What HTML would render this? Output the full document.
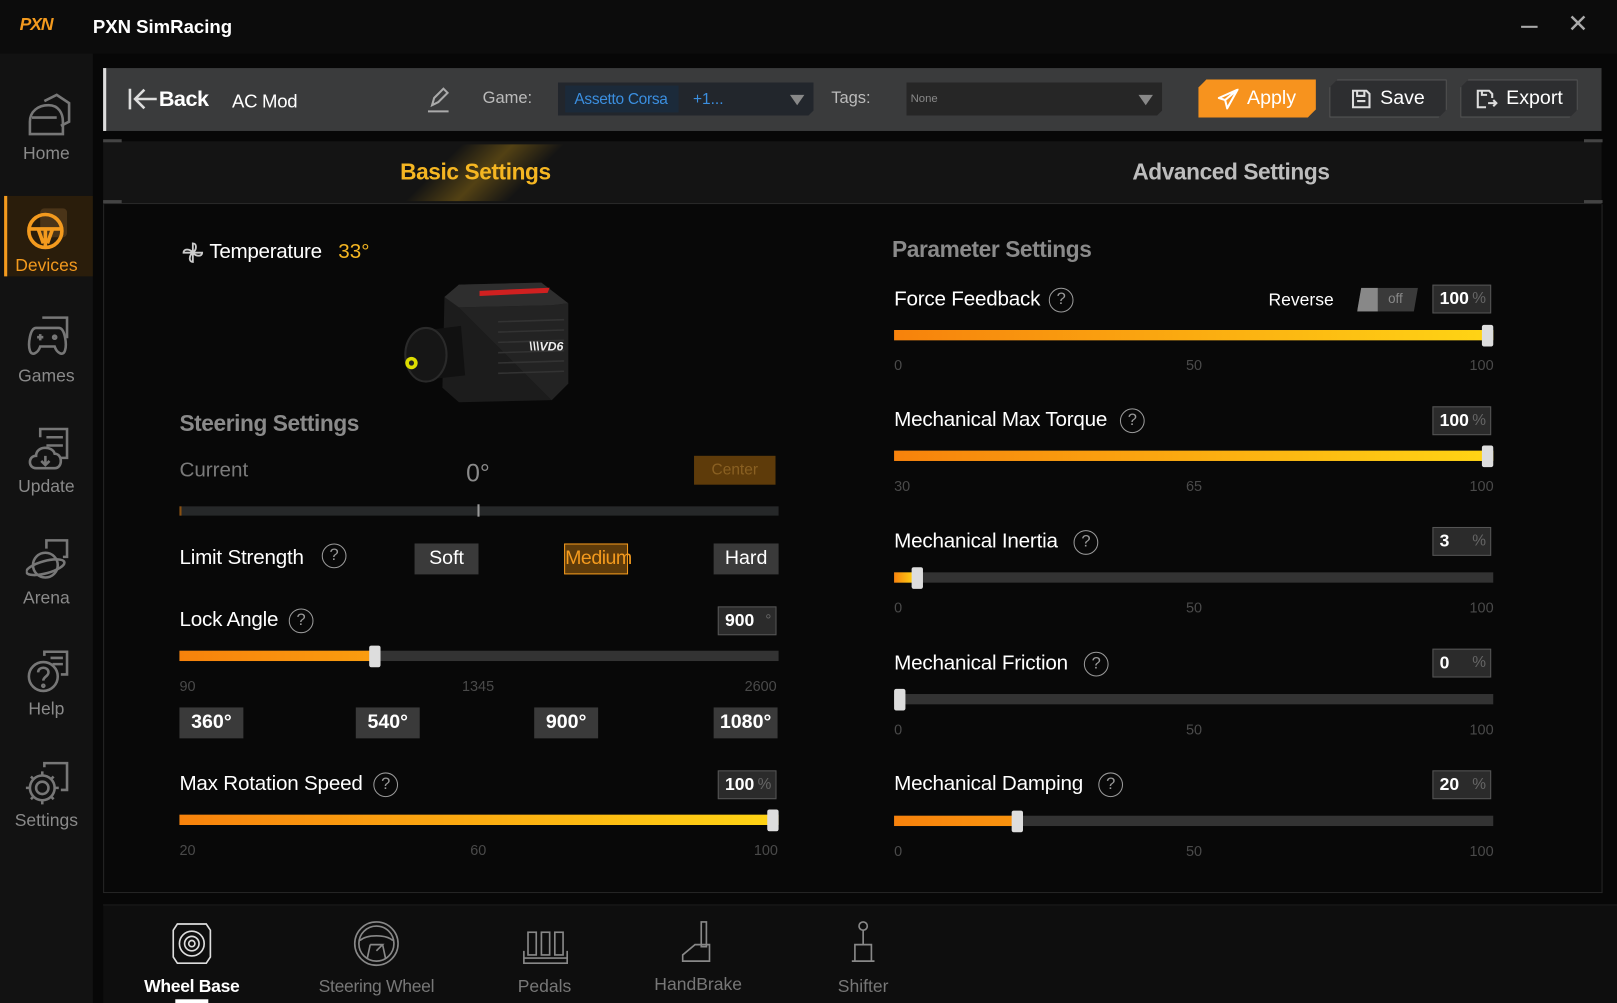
<!DOCTYPE html>
<html><head><meta charset="utf-8"><style>
*{margin:0;padding:0;box-sizing:border-box}
html,body{width:1617px;height:1003px;overflow:hidden;background:#060606}
#r{position:absolute;left:0;top:0;width:1568px;height:973px;transform:scale(1.03125);transform-origin:0 0;font-family:"Liberation Sans",sans-serif;color:#fff;background:#070707}
.a{position:absolute;white-space:nowrap}
.side{position:absolute;left:0;top:52px;width:90px;height:921px;background:#121212}
.sl{position:absolute;width:90px;text-align:center;font-size:17px;color:#8a8a8a}
.si{position:absolute;left:25px}
.btn{position:absolute;height:37px;border:1px solid #585858;background:#2d2e30;font-size:19px;display:flex;align-items:center;justify-content:center;gap:8px;clip-path:polygon(8px 0,100% 0,100% calc(100% - 8px),calc(100% - 8px) 100%,0 100%,0 8px)}
.lbl{font-size:20px;color:#fff;letter-spacing:-0.2px}
.q{display:inline-block;width:24px;height:24px;border:1.5px solid #999;border-radius:50%;color:#999;font-size:16px;text-align:center;line-height:21px;position:absolute}
.track{position:absolute;height:10px;background:#333}
.fill{position:absolute;left:0;top:0;height:10px;background:linear-gradient(90deg,#f7820c,#ffd515);}
.hd{position:absolute;width:11px;height:21px;background:#ddd;border-radius:2px;top:-5px}
.tk{position:absolute;font-size:14px;color:#4a4a4a}
.vb{position:absolute;width:57px;height:28px;border:1px solid #555;background:#2b2b2b;font-size:17px;font-weight:bold;padding-left:6px;line-height:26px}
.vb span{color:#666;font-weight:normal;font-size:15px;position:absolute;right:4px}
.pb{position:absolute;height:30px;background:#3a3a3a;font-size:19px;text-align:center;line-height:30px}
.bi{position:absolute;text-align:center;font-size:17px;color:#777;width:160px}
</style></head><body><div id="r">
<!-- title bar -->
<div class="a" style="left:0;top:0;width:1568px;height:52px;background:#0c0c0c"></div>
<div class="a" style="left:19px;top:14px;font-size:17px;font-weight:bold;color:#f39a1e;font-style:italic;letter-spacing:-1px">PXN</div>
<div class="a" style="left:90px;top:16px;font-size:18px;font-weight:bold">PXN SimRacing</div>
<div class="a" style="left:1475px;top:25px;width:16px;height:2px;background:#aaa"></div>
<div class="a" style="left:1520px;top:9px;font-size:24px;color:#aaa">✕</div>
<!-- sidebar -->
<div class="side">
 <svg class="si" style="top:38px" width="44" height="44" viewBox="0 0 44 44" fill="none" stroke="#777" stroke-width="2.5"><path d="M18 8 30 2 42 10 42 28 34 32"/><path d="M4 40 4 28C4 18 12 12 22 12 32 12 36 20 36 28L36 40Z"/><path d="M6 24 30 24"/></svg>
 <div class="sl" style="top:87px">Home</div>
 <div style="position:absolute;left:4px;top:138px;width:86px;height:78px;background:#2a1d0b;border-left:3px solid #f39a1e"></div>
 <svg class="si" style="top:148px" width="44" height="44" viewBox="0 0 44 44"><rect x="14" y="2" width="26" height="28" rx="4" fill="#4a3418"/><circle cx="19" cy="24" r="16" fill="none" stroke="#f39a1e" stroke-width="3.5"/><path d="M4 22 L34 22 M19 22 L19 39 M12 22 L17 36 M26 22 L21 36" stroke="#f39a1e" stroke-width="3.5"/></svg>
 <div class="sl" style="top:196px;color:#f39a1e">Devices</div>
 <svg class="si" style="top:252px" width="44" height="44" viewBox="0 0 44 44" fill="none" stroke="#777" stroke-width="2.5"><path d="M16 4 40 4 40 24"/><path d="M10 14 32 14C38 14 40 30 38 36 36 42 30 38 28 32L14 32C12 38 6 42 4 36 2 30 4 14 10 14Z"/><path d="M11 23 17 23 M14 20 14 26"/><circle cx="28" cy="23" r="1.5"/></svg>
 <div class="sl" style="top:303px">Games</div>
 <svg class="si" style="top:362px" width="44" height="44" viewBox="0 0 44 44" fill="none" stroke="#777" stroke-width="2.5"><path d="M14 10 14 2 40 2 40 30 34 30"/><path d="M20 10 36 10 M20 18 36 18"/><path d="M10 40C2 40 2 28 10 28 10 18 26 18 28 26 36 26 36 40 28 40Z"/><path d="M19 28 19 36 M15 33 19 37 23 33"/></svg>
 <div class="sl" style="top:410px">Update</div>
 <svg class="si" style="top:470px" width="44" height="44" viewBox="0 0 44 44" fill="none" stroke="#777" stroke-width="2.5"><path d="M20 10 20 2 40 2 40 18 36 18"/><circle cx="19" cy="26" r="12"/><ellipse cx="19" cy="28" rx="19" ry="6" transform="rotate(-15 19 28)"/></svg>
 <div class="sl" style="top:518px">Arena</div>
 <svg class="si" style="top:578px" width="44" height="44" viewBox="0 0 44 44" fill="none" stroke="#777" stroke-width="2.5"><path d="M18 6 18 2 40 2 40 24 34 24"/><path d="M24 8 36 8 M26 14 36 14"/><circle cx="17" cy="26" r="14"/><path d="M12 22C12 16 22 16 22 22 22 26 17 26 17 30"/><circle cx="17" cy="35" r="1"/></svg>
 <div class="sl" style="top:626px">Help</div>
 <svg class="si" style="top:686px" width="44" height="44" viewBox="0 0 44 44" fill="none" stroke="#777" stroke-width="2.5"><path d="M18 6 18 2 40 2 40 28 34 28"/><circle cx="16" cy="26" r="6"/><path d="M16 10 16 14 M16 38 16 42 M0 26 4 26 M28 26 32 26 M5 15 8 18 M24 34 27 37 M5 37 8 34 M24 18 27 15"/><circle cx="16" cy="26" r="12"/></svg>
 <div class="sl" style="top:734px">Settings</div>
</div>
<!-- toolbar -->
<div class="a" style="left:100px;top:66px;width:1453px;height:61px;background:#3a3b3c;border-left:3px solid #ddd"></div>
<svg class="a" style="left:124px;top:84px" width="30" height="24" viewBox="0 0 30 24" fill="none" stroke="#ddd" stroke-width="2.5"><path d="M2 2 2 22 M28 12 8 12 M16 3 7 12 16 21"/></svg>
<div class="a" style="left:154px;top:85px;font-size:21px;font-weight:bold;letter-spacing:-0.5px">Back</div>
<div class="a" style="left:225px;top:88px;font-size:18px;letter-spacing:-0.3px">AC Mod</div>
<svg class="a" style="left:413px;top:84px" width="24" height="26" viewBox="0 0 24 26" fill="none" stroke="#aaa" stroke-width="2"><path d="M6 18 8 11 17 2 21 6 12 15Z M2 24 22 24"/></svg>
<div class="a" style="left:468px;top:87px;font-size:16px;color:#bbb">Game:</div>
<div class="a" style="left:541px;top:80px;width:248px;height:32px;background:#22262c;clip-path:polygon(0 0,100% 0,100% calc(100% - 5px),calc(100% - 5px) 100%,0 100%)"></div>
<div class="a" style="left:548px;top:83px;width:110px;height:26px;background:#1b2a3a"></div>
<div class="a" style="left:557px;top:88px;font-size:15px;color:#3b8fe0;letter-spacing:-0.3px">Assetto Corsa</div>
<div class="a" style="left:672px;top:88px;font-size:15px;color:#3b8fe0">+1...</div>
<div class="a" style="left:766px;top:92px;border-left:7px solid transparent;border-right:7px solid transparent;border-top:10px solid #888"></div>
<div class="a" style="left:806px;top:87px;font-size:16px;color:#bbb">Tags:</div>
<div class="a" style="left:879px;top:80px;width:248px;height:32px;background:#262626;clip-path:polygon(0 0,100% 0,100% calc(100% - 5px),calc(100% - 5px) 100%,0 100%)"></div>
<div class="a" style="left:883px;top:90px;font-size:11px;color:#888">None</div>
<div class="a" style="left:1104px;top:92px;border-left:7px solid transparent;border-right:7px solid transparent;border-top:10px solid #888"></div>
<div class="btn" style="left:1162px;top:77px;width:114px;background:#f7931e;border-color:#f7931e"><svg width="20" height="20" viewBox="0 0 20 20" fill="none" stroke="#fff" stroke-width="2"><path d="M19 1 1 9 7 11 9 19Z M19 1 7 11"/></svg>Apply</div>
<div class="btn" style="left:1289px;top:77px;width:114px"><svg width="20" height="20" viewBox="0 0 20 20" fill="none" stroke="#ddd" stroke-width="2"><path d="M2 2 15 2 18 5 18 18 2 18Z M6 2 6 7 13 7 13 2 M6 12 14 12"/></svg>Save</div>
<div class="btn" style="left:1416px;top:77px;width:114px"><svg width="22" height="20" viewBox="0 0 22 20" fill="none" stroke="#ddd" stroke-width="2"><path d="M10 18 2 18 2 2 13 2 16 5 16 9 M6 2 6 6 11 6 M12 14 20 14 M17 11 20 14 17 17"/></svg>Export</div>
<!-- tabs -->
<div class="a" style="left:100px;top:137px;width:1453px;height:61px;background:#141414;border-bottom:1px solid #2c2c2c"></div>
<div class="a" style="left:100px;top:135px;width:18px;height:3px;background:#444"></div>
<div class="a" style="left:100px;top:194px;width:18px;height:3px;background:#444"></div>
<div class="a" style="left:1536px;top:135px;width:18px;height:3px;background:#444"></div>
<div class="a" style="left:1536px;top:194px;width:18px;height:3px;background:#444"></div>
<div class="a" style="left:420px;top:140px;width:100px;height:55px;background:linear-gradient(90deg,transparent,rgba(200,150,20,.35),transparent);transform:skewX(-45deg)"></div>
<div class="a" style="left:388px;top:154px;font-size:22px;font-weight:bold;color:#f5b622;letter-spacing:-0.4px">Basic Settings</div>
<div class="a" style="left:1098px;top:154px;font-size:22px;font-weight:bold;color:#bdbdbd;letter-spacing:-0.4px">Advanced Settings</div>
<!-- panel -->
<div class="a" style="left:100px;top:198px;width:1454px;height:668px;border:1px solid #262626;border-top:none;background:#080808"></div>
<!-- left content -->
<svg class="a" style="left:176px;top:234px" width="22" height="22" viewBox="0 0 22 22" fill="none" stroke="#ccc" stroke-width="1.8"><path d="M11 11 11 2 C15 2 15 8 11 11 M11 11 20 11 C20 15 14 15 11 11 M11 11 11 20 C7 20 7 14 11 11 M11 11 2 11 C2 7 8 7 11 11"/></svg>
<div class="a" style="left:203px;top:233px;font-size:20px;letter-spacing:-0.3px">Temperature</div>
<div class="a" style="left:328px;top:233px;font-size:20px;color:#f5b622">33°</div>
<!-- device image -->
<svg class="a" style="left:385px;top:272px" width="172" height="122" viewBox="0 0 172 122">
 <path d="M46 16 60 4 140 2 166 22 166 100 150 116 60 118 44 104Z" fill="#1c1c1c"/>
 <path d="M46 16 60 4 140 2 166 22 150 24 60 26Z" fill="#2e2e2e"/>
 <path d="M80 10 148 7 146 12 80 15Z" fill="#d02020"/>
 <path d="M60 26 150 24 166 22 166 100 150 116Z" fill="#232323"/>
 <g stroke="#333" stroke-width="1.5"><path d="M98 40 162 38 M98 50 162 48 M98 60 162 58 M98 70 162 68 M98 80 162 78 M98 90 162 88"/></g>
 <text x="128" y="68" font-family="Liberation Sans" font-size="12" font-weight="bold" font-style="italic" fill="#eee">\\\VD6</text>
 <path d="M30 48 62 44 66 92 30 96Z" fill="#111"/>
 <ellipse cx="28" cy="72" rx="20" ry="26" fill="#161616" stroke="#2a2a2a" stroke-width="2"/>
 <circle cx="14" cy="80" r="6" fill="#dd0"/>
 <circle cx="14" cy="80" r="2.5" fill="#222"/>
</svg>
<div class="a" style="left:174px;top:398px;font-size:22px;font-weight:bold;color:#8a8a8a;letter-spacing:-0.4px">Steering Settings</div>
<div class="a" style="left:174px;top:445px;font-size:20px;color:#7a7a7a">Current</div>
<div class="a" style="left:452px;top:446px;font-size:24px;color:#8a8a8a">0°</div>
<div class="a" style="left:673px;top:442px;width:79px;height:28px;background:#5e3b0a;color:#8a6022;font-size:15px;text-align:center;line-height:28px">Center</div>
<div class="a" style="left:174px;top:491px;width:581px;height:9px;background:#262829;border-left:2px solid #8a5010"></div>
<div class="a" style="left:463px;top:489px;width:2px;height:12px;background:#999"></div>
<div class="a lbl" style="left:174px;top:530px">Limit Strength</div>
<div class="q" style="left:312px;top:527px">?</div>
<div class="pb" style="left:402px;top:527px;width:62px">Soft</div>
<div class="pb" style="left:547px;top:527px;width:62px;background:#5e3b0a;border:1px solid #f39a1e;color:#f39a1e;line-height:28px;letter-spacing:-0.5px">Medium</div>
<div class="pb" style="left:692px;top:527px;width:63px">Hard</div>
<div class="a lbl" style="left:174px;top:590px">Lock Angle</div>
<div class="q" style="left:280px;top:590px">?</div>
<div class="vb" style="left:696px;top:588px">900<span>°</span></div>
<div class="track" style="left:174px;top:631px;width:581px"><div class="fill" style="width:190px;background-size:581px 10px"></div><div class="hd" style="left:184px"></div></div>
<div class="tk" style="left:174px;top:657px">90</div><div class="tk" style="left:448px;top:657px">1345</div><div class="tk" style="left:722px;top:657px">2600</div>
<div class="pb" style="left:174px;top:686px;width:62px;font-weight:bold">360°</div>
<div class="pb" style="left:345px;top:686px;width:62px;font-weight:bold">540°</div>
<div class="pb" style="left:518px;top:686px;width:62px;font-weight:bold">900°</div>
<div class="pb" style="left:692px;top:686px;width:62px;font-weight:bold">1080°</div>
<div class="a lbl" style="left:174px;top:749px">Max Rotation Speed</div>
<div class="q" style="left:362px;top:749px">?</div>
<div class="vb" style="left:696px;top:747px">100<span>%</span></div>
<div class="track" style="left:174px;top:790px;width:581px"><div class="fill" style="width:581px"></div><div class="hd" style="left:570px"></div></div>
<div class="tk" style="left:174px;top:816px">20</div><div class="tk" style="left:456px;top:816px">60</div><div class="tk" style="left:731px;top:816px">100</div>
<!-- right content -->
<div class="a" style="left:865px;top:229px;font-size:22px;font-weight:bold;color:#8a8a8a;letter-spacing:-0.4px">Parameter Settings</div>

<div class="a lbl" style="left:867px;top:279px">Force Feedback</div><div class="q" style="left:1017px;top:279px">?</div>
<div class="a" style="left:1230px;top:281px;font-size:17px">Reverse</div>
<div class="a" style="left:1316px;top:279px;width:59px;height:23px;background:#3a3a3a;clip-path:polygon(4px 0,100% 0,calc(100% - 4px) 100%,0 100%)"><div style="position:absolute;left:0;top:0;width:20px;height:23px;background:#888"></div><div style="position:absolute;left:30px;top:3px;font-size:13px;color:#888">off</div></div>
<div class="vb" style="left:1389px;top:276px">100<span>%</span></div>
<div class="track" style="left:867px;top:320px;width:581px"><div class="fill" style="width:581px"></div><div class="hd" style="left:570px"></div></div>
<div class="tk" style="left:867px;top:346px">0</div><div class="tk" style="left:1150px;top:346px">50</div><div class="tk" style="left:1425px;top:346px">100</div>

<div class="a lbl" style="left:867px;top:396px">Mechanical Max Torque</div><div class="q" style="left:1086px;top:396px">?</div>
<div class="vb" style="left:1389px;top:394px">100<span>%</span></div>
<div class="track" style="left:867px;top:437px;width:581px"><div class="fill" style="width:581px"></div><div class="hd" style="left:570px"></div></div>
<div class="tk" style="left:867px;top:463px">30</div><div class="tk" style="left:1150px;top:463px">65</div><div class="tk" style="left:1425px;top:463px">100</div>

<div class="a lbl" style="left:867px;top:514px">Mechanical Inertia</div><div class="q" style="left:1041px;top:514px">?</div>
<div class="vb" style="left:1389px;top:511px">3<span>%</span></div>
<div class="track" style="left:867px;top:555px;width:581px"><div class="fill" style="width:20px"></div><div class="hd" style="left:17px"></div></div>
<div class="tk" style="left:867px;top:581px">0</div><div class="tk" style="left:1150px;top:581px">50</div><div class="tk" style="left:1425px;top:581px">100</div>

<div class="a lbl" style="left:867px;top:632px">Mechanical Friction</div><div class="q" style="left:1051px;top:632px">?</div>
<div class="vb" style="left:1389px;top:629px">0<span>%</span></div>
<div class="track" style="left:867px;top:673px;width:581px"><div class="hd" style="left:0px"></div></div>
<div class="tk" style="left:867px;top:699px">0</div><div class="tk" style="left:1150px;top:699px">50</div><div class="tk" style="left:1425px;top:699px">100</div>

<div class="a lbl" style="left:867px;top:749px">Mechanical Damping</div><div class="q" style="left:1065px;top:749px">?</div>
<div class="vb" style="left:1389px;top:747px">20<span>%</span></div>
<div class="track" style="left:867px;top:791px;width:581px"><div class="fill" style="width:120px;background-size:581px 10px"></div><div class="hd" style="left:114px"></div></div>
<div class="tk" style="left:867px;top:817px">0</div><div class="tk" style="left:1150px;top:817px">50</div><div class="tk" style="left:1425px;top:817px">100</div>
<!-- bottom bar -->
<div class="a" style="left:100px;top:877px;width:1468px;height:96px;background:#0e0e0e;border-top:1px solid #1c1c1c"></div>
<svg class="a" style="left:166px;top:894px" width="40" height="42" viewBox="0 0 40 42" fill="none" stroke="#ddd" stroke-width="1.6"><path d="M6 2 34 2 38 8 38 34 34 40 6 40 2 34 2 8Z"/><circle cx="20" cy="21" r="12"/><circle cx="20" cy="21" r="7"/><circle cx="20" cy="21" r="3"/></svg>
<div class="bi" style="left:106px;top:947px;color:#fff;font-weight:bold;letter-spacing:-0.3px">Wheel Base</div>
<div class="a" style="left:170px;top:969px;width:32px;height:4px;background:#fff"></div>
<svg class="a" style="left:342px;top:892px" width="46" height="46" viewBox="0 0 46 46" fill="none" stroke="#888" stroke-width="1.6"><circle cx="23" cy="23" r="21"/><circle cx="23" cy="23" r="17"/><path d="M7 20C14 14 32 14 39 20 M17 24 14 38 M29 24 32 38 M17 24 29 24 23 30"/></svg>
<div class="bi" style="left:285px;top:947px;letter-spacing:-0.3px">Steering Wheel</div>
<svg class="a" style="left:506px;top:902px" width="46" height="34" viewBox="0 0 46 34" fill="none" stroke="#888" stroke-width="1.6"><rect x="6" y="2" width="8" height="22"/><rect x="19" y="2" width="8" height="22"/><rect x="32" y="2" width="8" height="22"/><path d="M2 20 2 32 44 32 44 20 M2 27 44 27"/></svg>
<div class="bi" style="left:448px;top:947px">Pedals</div>
<svg class="a" style="left:660px;top:892px" width="32" height="44" viewBox="0 0 32 44" fill="none" stroke="#888" stroke-width="1.6"><rect x="20" y="2" width="5" height="24"/><path d="M14 24 28 24 28 40 2 40 2 34Z"/></svg>
<div class="bi" style="left:597px;top:945px">HandBrake</div>
<svg class="a" style="left:824px;top:892px" width="26" height="44" viewBox="0 0 26 44" fill="none" stroke="#888" stroke-width="1.6"><circle cx="13" cy="6" r="4"/><path d="M13 10 13 24 M5 24 21 24 21 40 5 40Z M2 40 24 40"/></svg>
<div class="bi" style="left:757px;top:947px">Shifter</div>
</div></body></html>
